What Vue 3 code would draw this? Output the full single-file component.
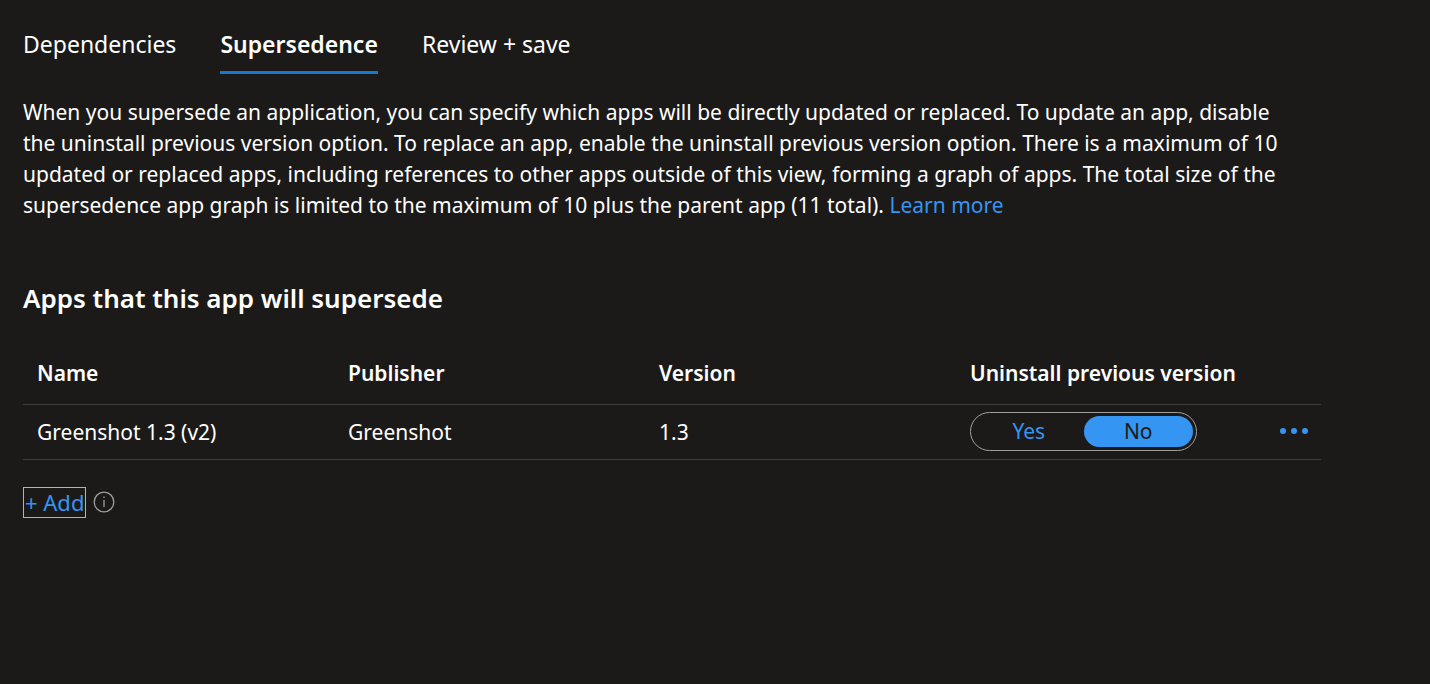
<script setup>
import { ref } from 'vue'
const tabs = ['Dependencies', 'Supersedence', 'Review + save']
const active = ref('Supersedence')
const columns = ['Name', 'Publisher', 'Version', 'Uninstall previous version']
const uninstall = ref('No')
</script>

<template>
  <main class="page">
    <nav class="tabs">
      <button v-for="t in tabs" :key="t" class="tab" :class="{ active: t === active }" @click="active = t">{{ t }}</button>
    </nav>
    <p class="intro">
      When you supersede an application, you can specify which apps will be directly updated or replaced. To update an app, disable the uninstall previous version option. To replace an app, enable the uninstall previous version option. There is a maximum of 10 updated or replaced apps, including references to other apps outside of this view, forming a graph of apps. The total size of the supersedence app graph is limited to the maximum of 10 plus the parent app (11 total). <a href="#">Learn more</a>
    </p>
    <h2>Apps that this app will supersede</h2>
    <table>
      <thead>
        <tr><th v-for="c in columns" :key="c" scope="col">{{ c }}</th><td class="end"></td></tr>
      </thead>
      <tbody>
        <tr>
          <td>Greenshot 1.3 (v2)</td>
          <td>Greenshot</td>
          <td>1.3</td>
          <td class="choice">
            <div class="toggle" role="group" aria-label="Uninstall previous version">
              <button v-for="o in ['Yes', 'No']" :key="o" :class="{ on: uninstall === o }" :aria-pressed="uninstall === o" @click="uninstall = o">{{ o }}</button>
            </div>
          </td>
          <td class="end">
            <button class="more" aria-label="More options">
              <svg width="30" height="8" viewBox="0 0 30 8" fill="currentColor"><circle cx="4" cy="4" r="3" /><circle cx="15" cy="4" r="3" /><circle cx="26" cy="4" r="3" /></svg>
            </button>
          </td>
        </tr>
      </tbody>
    </table>
    <div class="actions">
      <a href="#" class="add">+ Add</a>
      <button class="info" aria-label="Information">
        <svg width="22" height="22" viewBox="0 0 22 22" fill="none" stroke="currentColor" stroke-width="1.3"><circle cx="11" cy="11" r="9.8" /><path d="M11 9v7M11 5.5v1.6" /></svg>
      </button>
    </div>
  </main>
</template>

<style>
body { margin: 0; background: #1b1a19; }
</style>

<style scoped>
.page { box-sizing: border-box; min-height: 100vh; padding: 24px 109px 24px 23px; color: #fff; font: 21px/31px "Noto Sans", sans-serif; }
button { padding: 0; border: 0; background: none; color: inherit; font: inherit; cursor: pointer; }
a { color: #3595f2; text-decoration: none; }
.tabs { display: flex; gap: 44px; }
.tab { height: 50px; padding-bottom: 6px; border-bottom: 3px solid transparent; font-size: 23px; }
.tab.active { border-color: #1a78d0; font-weight: 600; }
.intro { margin: 23px 0 0; padding-right: 20px; }
h2 { margin: 60px 0 0; font-size: 26px; line-height: 34px; font-weight: 600; }
table { width: 100%; margin-top: 27px; border-collapse: collapse; table-layout: fixed; }
th, td { box-sizing: border-box; padding: 2px 14px 0; border-bottom: 1px solid #403f3e; text-align: left; white-space: nowrap; }
th { height: 62px; font-weight: 600; }
tbody td { height: 55px; }
.end { width: 54px; padding: 0 12px; }
tbody .choice, tbody .end { padding-top: 0; padding-bottom: 1px; }
.toggle { display: flex; box-sizing: border-box; width: 227px; height: 39px; padding: 3px; border: 1px solid #a19f9d; border-radius: 20px; }
.toggle button { flex: 1; border-radius: 16px; color: #3595f2; }
.toggle .on { background: #3595f2; color: #1b1a19; }
.more { display: flex; color: #3595f2; }
.actions { display: flex; align-items: center; gap: 7px; margin-top: 27px; }
.add { padding: 0 1px; border: 1px solid #b5b3b1; font-size: 22px; line-height: 29px; }
.info { display: flex; color: #a19f9d; }
</style>
